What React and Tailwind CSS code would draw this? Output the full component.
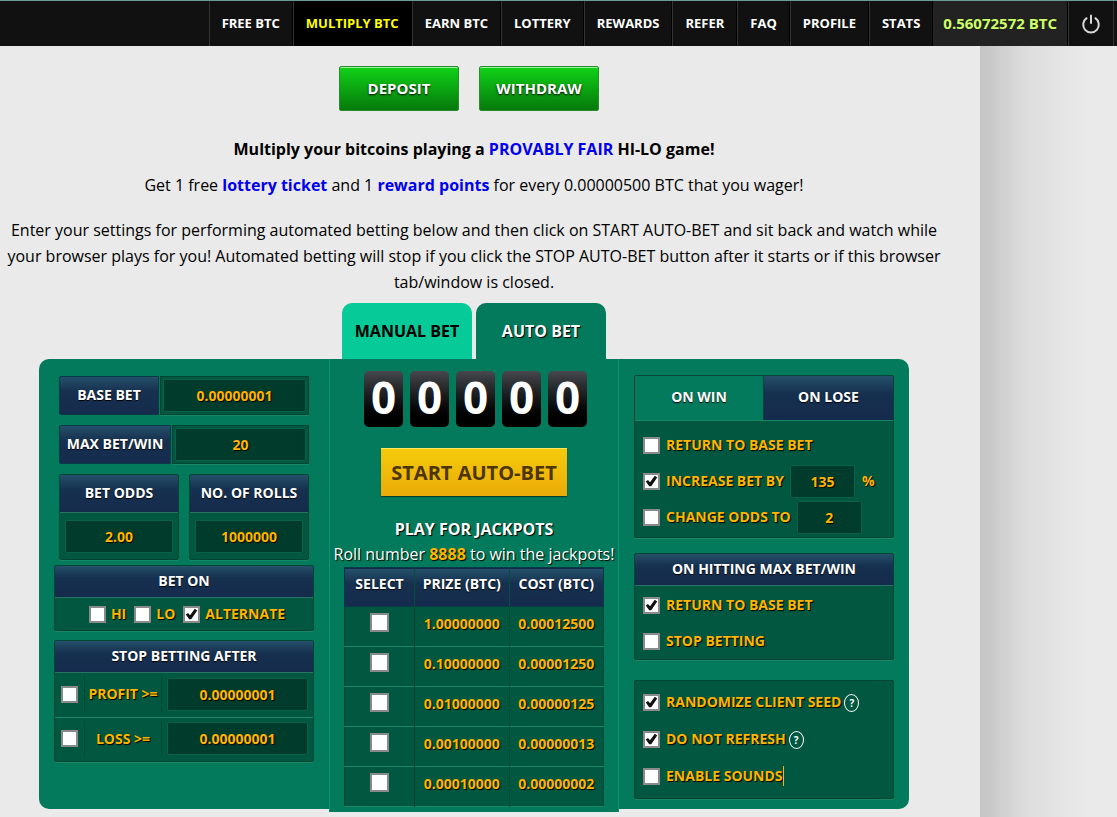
import React, { useState } from 'react';

const NAV_ITEMS = ['FREE BTC', 'MULTIPLY BTC', 'EARN BTC', 'LOTTERY', 'REWARDS', 'REFER', 'FAQ', 'PROFILE', 'STATS'];

const JACKPOTS = [
  { prize: '1.00000000', cost: '0.00012500' },
  { prize: '0.10000000', cost: '0.00001250' },
  { prize: '0.01000000', cost: '0.00000125' },
  { prize: '0.00100000', cost: '0.00000013' },
  { prize: '0.00010000', cost: '0.00000002' }
];

// Shared styles
const navyHeader = 'pb-[2px] bg-linear-to-b from-[#25506a] via-[#16304f] via-40% to-[#152b4d] text-white text-sm font-bold flex items-center justify-center [text-shadow:0_1px_1px_#000]';
const cardFrame = 'border border-[#004632] shadow-[0_1px_0_#178764] rounded-xs bg-[#01573f]';
const amberText = 'text-[#ffb400] text-sm font-bold [text-shadow:1px_1px_1px_#000]';

const Checkbox = ({ large = false, ...props }) => (
  <span className={`relative inline-block shrink-0 ${large ? 'size-[19px]' : 'size-[17px]'}`}>
    <input
      type="checkbox"
      className="peer block size-full appearance-none bg-white border-2 border-[#8a8a8a]"
      {...props}
    />
    <svg
      viewBox="0 0 17 17"
      className="absolute inset-0 size-full hidden peer-checked:block pointer-events-none"
      aria-hidden="true"
    >
      <path d="M2.8 8.6 L5 7 L7 9.2 L11.8 2.8 L14.2 4.4 L8.2 13.2 L6.2 13.2 Z" fill="#111" />
    </svg>
  </span>
);

const CheckRow = ({ label, checked = false, children }) => (
  <div className="flex items-center h-9">
    <label className={`flex items-center gap-[6px] ${amberText}`}>
      <Checkbox defaultChecked={checked} />
      <span>{label}</span>
    </label>
    {children}
  </div>
);

const BetInput = ({ label, value, className = '' }) => (
  <input
    type="text"
    aria-label={label}
    defaultValue={value}
    className={`h-[33px] min-w-0 text-center bg-[#003b2b] border border-[#0b6048] rounded-xs outline-none ${amberText} ${className}`}
  />
);

const HelpIcon = () => (
  <button
    type="button"
    aria-label="Help"
    className="ml-[3px] mt-[2px] flex items-center justify-center w-[15px] h-[18px] rounded-[50%] border border-white text-white text-[10px] leading-none font-bold"
  >
    ?
  </button>
);

const InlineField = ({ label, value, labelClass }) => (
  <div className="flex h-[39px]">
    <div className={`${navyHeader} ${labelClass} rounded-l-xs border border-[#0a3a48]`}>{label}</div>
    <div className="flex flex-1 items-center px-[2px] ml-px border border-[#004632] shadow-[0_1px_0_#178764] bg-[#01573f]">
      <BetInput label={label} value={value} className="w-full" />
    </div>
  </div>
);

const StackedField = ({ label, value }) => (
  <div className={`flex-1 overflow-hidden ${cardFrame}`}>
    <div className={`${navyHeader} h-[38px] border-b border-[#2a7466]`}>{label}</div>
    <div className="flex items-center h-[46px] px-[5px]">
      <BetInput label={label} value={value} className="w-full" />
    </div>
  </div>
);

const StopRow = ({ label, value, className = '' }) => (
  <div className={`flex items-center h-11 pb-[2px] ${className}`}>
    <div className="w-[29px] pl-[6px] flex items-center">
      <Checkbox aria-label={`Stop on ${label}`} />
    </div>
    <div className={`w-[78px] h-9 flex items-center justify-center border-x border-[#004a36] ${amberText}`}>
      {label}
    </div>
    <div className="flex-1 px-[5px] flex">
      <BetInput label={label} value={value} className="w-full" />
    </div>
  </div>
);

const TopBar = () => (
  <header className="h-[46px] bg-[#111] border-t border-[#6d9a96] flex justify-end pr-[3px] text-white">
    <nav className="flex text-[13px] font-bold">
      {NAV_ITEMS.map((item) => (
        <a
          key={item}
          href="#"
          className={`flex items-center px-3 border-l border-l-[#333] border-r border-r-black whitespace-nowrap ${
            item === 'MULTIPLY BTC' ? 'bg-black text-[#ffff00]' : ''
          }`}
        >
          {item}
        </a>
      ))}
    </nav>
    <a href="#" className="flex items-center px-[10px] bg-[#222] border-r border-black text-[#ccff66] text-[15px] font-bold whitespace-nowrap">
      0.56072572 BTC
    </a>
    <button type="button" aria-label="Log out" className="w-[46px] flex items-center justify-center border-x border-[#333]">
      <svg width="20" height="20" viewBox="0 0 20 20" fill="none" stroke="#d8d8d8" strokeWidth="2" strokeLinecap="round">
        <path d="M10 1.5V9" />
        <path d="M5.6 4.2A7.8 7.8 0 1 0 14.4 4.2" />
      </svg>
    </button>
  </header>
);

const LeftColumn = () => (
  <div className="pt-[17px] flex flex-col items-center">
    <div className="w-[250px] flex flex-col gap-[10px]">
      <InlineField label="BASE BET" value="0.00000001" labelClass="w-[100px]" />
      <InlineField label="MAX BET/WIN" value="20" labelClass="w-[112px]" />
      <div className="flex gap-[10px]">
        <StackedField label="BET ODDS" value="2.00" />
        <StackedField label="NO. OF ROLLS" value="1000000" />
      </div>
    </div>

    <div className={`w-[260px] mt-[5px] overflow-hidden ${cardFrame}`}>
      <div className={`${navyHeader} h-8 border-b border-[#2a7466]`}>BET ON</div>
      <div className={`flex items-center justify-center gap-2 h-8 pl-[6px] ${amberText}`}>
        <label className="flex items-center gap-[5px]"><Checkbox />HI</label>
        <label className="flex items-center gap-[5px]"><Checkbox />LO</label>
        <label className="flex items-center gap-[5px]"><Checkbox defaultChecked />ALTERNATE</label>
      </div>
    </div>

    <div className={`w-[260px] mt-[9px] overflow-hidden ${cardFrame}`}>
      <div className={`${navyHeader} h-8 border-b border-[#2a7466]`}>STOP BETTING AFTER</div>
      <StopRow label="PROFIT >=" value="0.00000001" />
      <StopRow label="LOSS >=" value="0.00000001" className="border-t border-[#178764]" />
    </div>
  </div>
);

const MiddleColumn = () => (
  <div className="-mb-[3px] pt-3 pb-[5px] flex flex-col items-center bg-[#027a5b] border-x border-[#0c9470] text-white">
    <div className="flex gap-[7px] pl-[3px]">
      {[0, 0, 0, 0, 0].map((digit, index) => (
        <span
          key={index}
          className="w-[39px] h-14 pb-1 flex items-center justify-center rounded-[5px] bg-linear-to-b from-[#45484d] to-black text-[44px] leading-none font-bold"
        >
          {digit}
        </span>
      ))}
    </div>

    <button
      type="button"
      className="mt-[21px] h-12 px-[10px] bg-linear-to-b from-[#f5cb0c] to-[#eaaa08] border-t border-[#ffe45c] shadow-[0_1px_1px_#00402e] text-[#4d3500] text-xl font-bold whitespace-nowrap"
    >
      START AUTO-BET
    </button>

    <h2 className="mt-5 text-base leading-[26px] font-bold [text-shadow:1px_1px_1px_#000]">PLAY FOR JACKPOTS</h2>
    <p className="text-base leading-[25px] whitespace-nowrap [text-shadow:1px_1px_1px_#000]">
      Roll number <b className="text-[#ffb400]">8888</b> to win the jackpots!
    </p>

    <table className="w-[260px] table-fixed border-collapse text-sm font-bold text-center">
      <thead>
        <tr className="h-[39px] bg-linear-to-b from-[#25506a] via-[#16304f] via-40% to-[#152b4d] border border-[#0a3a48] [text-shadow:0_1px_1px_#000]">
          <th className="w-[70px] p-0 pb-[6px] border-r border-[#00503a]">SELECT</th>
          <th className="p-0 pb-[6px] border-r border-[#00503a]">PRIZE (BTC)</th>
          <th className="p-0 pb-[6px]">COST (BTC)</th>
        </tr>
      </thead>
      <tbody>
        {JACKPOTS.map(({ prize, cost }) => (
          <tr key={prize} className={`h-10 bg-[#01573f] border-y border-y-[#178764] border-x border-x-[#004632] ${amberText}`}>
            <td className="p-0 border-r border-r-[#004632]">
              <span className="flex justify-center pb-2">
                <Checkbox large aria-label={`Play for ${prize} BTC`} />
              </span>
            </td>
            <td className="p-0 pb-[6px] border-r border-r-[#004632]">{prize}</td>
            <td className="p-0 pb-[6px]">{cost}</td>
          </tr>
        ))}
      </tbody>
    </table>
  </div>
);

const RightColumn = () => {
  const [tab, setTab] = useState('win');

  const tabClass = (name) =>
    tab === name
      ? 'pb-[2px] bg-[#027a5b] text-white text-sm font-bold [text-shadow:0_1px_1px_#000]'
      : navyHeader;

  return (
    <div className="pt-4 flex flex-col items-center">
      <div className={`w-[260px] overflow-hidden ${cardFrame}`}>
        <div className="grid grid-cols-2 h-[45px] border-b border-[#178764]">
          <button type="button" onClick={() => setTab('win')} className={`border-r border-[#004632] ${tabClass('win')}`}>
            ON WIN
          </button>
          <button type="button" onClick={() => setTab('lose')} className={tabClass('lose')}>
            ON LOSE
          </button>
        </div>
        <div className="px-2 pt-[6px] pb-[2px] flex flex-col">
          <CheckRow label="RETURN TO BASE BET" />
          <CheckRow label="INCREASE BET BY" checked>
            <BetInput label="Increase percent" value="135" className="w-[65px] ml-[6px]" />
            <span className={`ml-[7px] ${amberText}`}>%</span>
          </CheckRow>
          <CheckRow label="CHANGE ODDS TO">
            <BetInput label="New odds" value="2" className="w-[65px] ml-[6px]" />
          </CheckRow>
        </div>
      </div>

      <div className={`w-[260px] mt-[15px] overflow-hidden ${cardFrame}`}>
        <div className={`${navyHeader} h-8 border-b border-[#2a7466]`}>ON HITTING MAX BET/WIN</div>
        <div className="px-2 pt-px flex flex-col">
          <CheckRow label="RETURN TO BASE BET" checked />
          <CheckRow label="STOP BETTING" />
        </div>
      </div>

      <div className={`w-[260px] mt-5 px-2 pt-[3px] pb-1 flex flex-col gap-px ${cardFrame}`}>
        <CheckRow label="RANDOMIZE CLIENT SEED" checked>
          <HelpIcon />
        </CheckRow>
        <CheckRow label="DO NOT REFRESH" checked>
          <HelpIcon />
        </CheckRow>
        <CheckRow label="ENABLE SOUNDS">
          <span className="h-5 border-l border-[#ffb400]" />
        </CheckRow>
      </div>
    </div>
  );
};

const App = () => {
  const greenButton = 'w-[120px] h-[45px] rounded-xs border border-[#2a8a2e] bg-linear-to-b from-[#10d317] to-[#067a0b] shadow-[inset_0_1px_0_#9bf09e] text-white text-[15px] font-bold [text-shadow:0_1px_2px_#000]';

  return (
    <div className="min-h-screen flex flex-col bg-[#eaeaea] text-black font-['Open_Sans','Noto_Sans',sans-serif]">
      <TopBar />

      <div className="flex flex-1">
        <main className="w-full max-w-[980px] pt-5 pr-8 text-center">
          <div className="flex justify-center gap-5 pr-[10px]">
            <button type="button" className={greenButton}>DEPOSIT</button>
            <button type="button" className={greenButton}>WITHDRAW</button>
          </div>

          <h1 className="mt-[25px] text-base leading-[26px] font-bold">
            Multiply your bitcoins playing a <a href="#" className="text-[#0000ee]">PROVABLY FAIR</a> HI-LO game!
          </h1>
          <p className="mt-[10px] text-base leading-[26px]">
            Get 1 free <a href="#" className="font-bold text-[#0000ee]">lottery ticket</a> and 1{' '}
            <a href="#" className="font-bold text-[#0000ee]">reward points</a> for every 0.00000500 BTC that you wager!
          </p>
          <p className="mt-[19px] text-base leading-[26px]">
            Enter your settings for performing automated betting below and then click on START AUTO-BET and sit back and
            watch while your browser plays for you! Automated betting will stop if you click the STOP AUTO-BET button
            after it starts or if this browser tab/window is closed.
          </p>

          {/* Manual / auto tabs */}
          <div className="mt-2 flex justify-center gap-1">
            <button type="button" className="w-[130px] h-14 rounded-t-[10px] bg-[#06cb98] text-black text-base font-bold">
              MANUAL BET
            </button>
            <button type="button" className="w-[130px] h-14 rounded-t-[10px] bg-[#027a5b] text-white text-base font-bold [text-shadow:1px_1px_1px_#000]">
              AUTO BET
            </button>
          </div>

          <div className="max-w-[870px] mx-auto grid grid-cols-[1fr_290px_1fr] rounded-[10px] bg-[#027a5b]">
            <LeftColumn />
            <MiddleColumn />
            <RightColumn />
          </div>
        </main>

        {/* Shadow beside the page */}
        <div className="flex-1 bg-linear-to-r from-[#c4c4c4] via-[#dedede] via-35% to-[#eaeaea] to-80%" />
      </div>
    </div>
  );
};

export default App;
